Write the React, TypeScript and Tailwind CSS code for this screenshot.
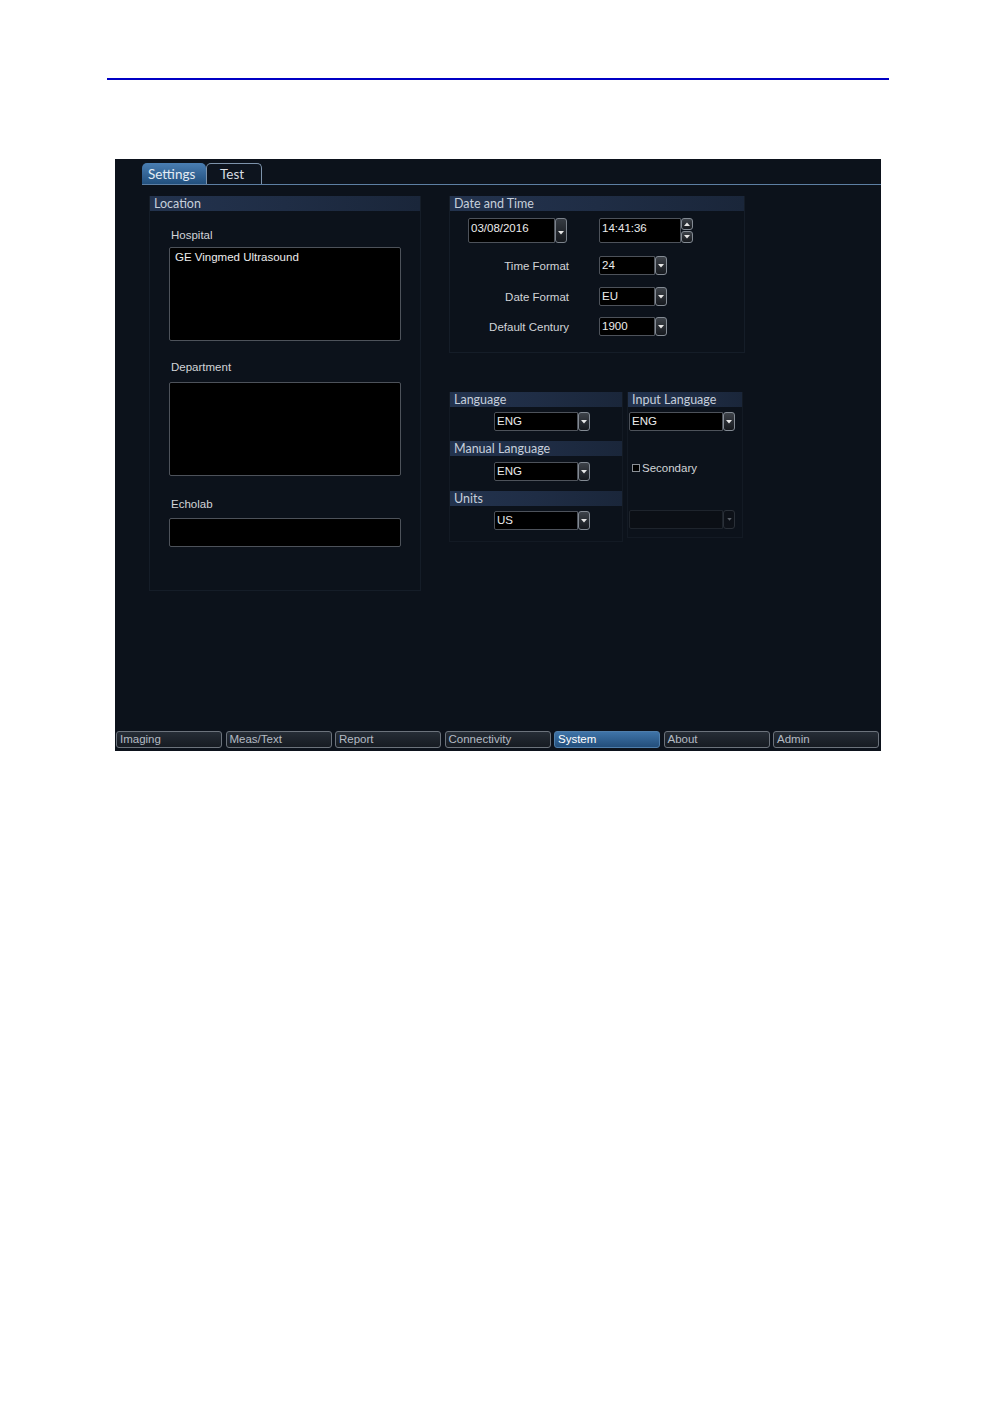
import React from "react";

const LBL = "font-['Liberation_Sans',Arial,sans-serif]";
const HDR = "font-['Lato','Noto_Sans',sans-serif]";

function Arrow({ up = false }: { up?: boolean }) {
  return (
    <svg width="6" height="4" viewBox="0 0 6 4" className="block">
      {up ? <path d="M0 4 L3 0.5 L6 4 Z" fill="#e6e6e6" /> : <path d="M0 0 L6 0 L3 3.5 Z" fill="#e6e6e6" />}
    </svg>
  );
}

function Btn({ className = "", up = false, dim = false }: { className?: string; up?: boolean; dim?: boolean }) {
  return (
    <div
      className={`flex items-center justify-center rounded-[3px] border ${
        dim ? "border-[#2a3038] bg-[#0d1118]" : "border-[#838a93] bg-gradient-to-b from-[#3e434a] to-[#16191e]"
      } ${className}`}
    >
      {dim ? (
        <svg width="5" height="3" viewBox="0 0 6 4"><path d="M0 0 L6 0 L3 3.5 Z" fill="#5a6068" /></svg>
      ) : (
        <Arrow up={up} />
      )}
    </div>
  );
}

function Drop({ w, value, dim = false }: { w: string; value?: string; dim?: boolean }) {
  return (
    <div className={`flex h-[19px] ${w}`}>
      <div
        className={`flex-1 rounded-l-[2px] border ${
          dim ? "border-[#1e242c] bg-[#0b0f15]" : "border-[#4d525a] bg-black"
        } pl-[2px] text-[11.5px] leading-[17px] text-[#ececec] ${LBL}`}
      >
        {value}
      </div>
      <Btn className="w-[12px] h-[19px]" dim={dim} />
    </div>
  );
}

function Header({ children, className = "" }: { children: React.ReactNode; className?: string }) {
  return (
    <div
      className={`h-[15px] bg-gradient-to-r from-[#23334e] via-[#1f2d45] to-[#1a263a] pl-[4px] text-[12.5px] leading-[15px] text-[#c6cfdb] ${HDR} ${className}`}
    >
      {children}
    </div>
  );
}

function Label({ children, className = "" }: { children: React.ReactNode; className?: string }) {
  return <div className={`text-[11.5px] leading-[14px] text-[#d2d4d8] ${LBL} ${className}`}>{children}</div>;
}

function FormRow({ label, value, mt }: { label: string; value: string; mt: string }) {
  return (
    <div className={`flex items-center ${mt}`}>
      <Label className="w-[119px] text-right">{label}</Label>
      <div className="ml-[30px]">
        <Drop w="w-[68px]" value={value} />
      </div>
    </div>
  );
}

const bottomTabs = ["Imaging", "Meas/Text", "Report", "Connectivity", "System", "About", "Admin"];

export default function App() {
  return (
    <div className="w-[996px] h-[1416px] bg-white overflow-hidden">
      <div className="ml-[107px] mt-[78px] h-[2px] w-[782px] bg-[#0000c4]" />
      <div className="ml-[115px] mt-[79px] flex h-[592px] w-[766px] flex-col bg-[#0c121b]">
        {/* top tabs */}
        <div className="flex h-[26px] items-end pt-[4px]">
          <div className="ml-[27px] flex h-[21px] flex-1 items-end border-b border-[#5d7fa3]">
            <div
              className={`flex h-[21px] w-[64px] items-end rounded-t-[5px] bg-gradient-to-b from-[#4a7eb2] to-[#22507e] pb-[2px] pl-[6px] text-[13.5px] leading-[15px] text-[#e3ebf4] ${HDR}`}
            >
              Settings
            </div>
            <div
              className={`flex h-[21px] w-[56px] items-end rounded-t-[5px] border border-b-0 border-[#7d93ab] bg-[#0d141e] pb-[2px] pl-[13px] text-[13.5px] leading-[15px] text-[#d8dde3] ${HDR}`}
            >
              Test
            </div>
          </div>
        </div>

        {/* content */}
        <div className="mt-[11px] flex pl-[34px]">
          {/* Location */}
          <div className="flex h-[395px] w-[272px] flex-col border-x border-b border-[#151d28]">
            <Header>Location</Header>
            <div className="pl-[19px]">
              <Label className="ml-[2px] mt-[17px]">Hospital</Label>
              <div className={`mt-[5px] h-[94px] w-[232px] rounded-[2px] border border-[#4d525a] bg-black pl-[5px] pt-[2px] text-[11.5px] leading-[14px] text-[#ececec] ${LBL}`}>
                GE Vingmed Ultrasound
              </div>
              <Label className="ml-[2px] mt-[19px]">Department</Label>
              <div className="mt-[8px] h-[94px] w-[232px] rounded-[2px] border border-[#4d525a] bg-black" />
              <Label className="ml-[2px] mt-[21px]">Echolab</Label>
              <div className="mt-[7px] h-[29px] w-[232px] rounded-[2px] border border-[#4d525a] bg-black" />
            </div>
          </div>

          {/* right column */}
          <div className="ml-[28px] flex w-[296px] flex-col">
            {/* Date and Time */}
            <div className="h-[157px] border-x border-b border-[#151d28]">
              <Header>Date and Time</Header>
              <div className="mt-[7px] flex pl-[18px]">
                <div className="flex h-[25px] w-[99px]">
                  <div className={`flex-1 rounded-l-[2px] border border-[#4d525a] bg-black pl-[2px] pt-[2px] text-[11.5px] leading-[14px] text-[#ececec] ${LBL}`}>
                    03/08/2016
                  </div>
                  <div className="flex h-[25px] w-[12px] flex-col justify-end rounded-[3px] border border-[#7b828b] bg-gradient-to-b from-[#363b42] to-[#15181d] pb-[7px]">
                    <div className="flex justify-center">
                      <Arrow />
                    </div>
                  </div>
                </div>
                <div className="ml-[32px] flex h-[25px] w-[94px]">
                  <div className={`flex-1 rounded-l-[2px] border border-[#4d525a] bg-black pl-[2px] pt-[2px] text-[11.5px] leading-[14px] text-[#ececec] ${LBL}`}>
                    14:41:36
                  </div>
                  <div className="flex w-[12px] flex-col">
                    <Btn className="h-[12px] w-[12px]" up />
                    <Btn className="mt-[1px] h-[12px] w-[12px]" />
                  </div>
                </div>
              </div>
              <FormRow label="Time Format" value="24" mt="mt-[13px]" />
              <FormRow label="Date Format" value="EU" mt="mt-[12px]" />
              <FormRow label="Default Century" value="1900" mt="mt-[11px]" />
            </div>

            {/* Language section */}
            <div className="mt-[39px] flex">
              <div className="h-[150px] w-[174px] border-x border-b border-[#131a24]">
                <Header>Language</Header>
                <div className="ml-[44px] mt-[5px]">
                  <Drop w="w-[96px]" value="ENG" />
                </div>
                <Header className="mt-[10px]">Manual Language</Header>
                <div className="ml-[44px] mt-[6px]">
                  <Drop w="w-[96px]" value="ENG" />
                </div>
                <Header className="mt-[10px]">Units</Header>
                <div className="ml-[44px] mt-[5px]">
                  <Drop w="w-[96px]" value="US" />
                </div>
              </div>
              <div className="ml-[4px] h-[146px] w-[116px] border-x border-b border-[#131a24]">
                <Header>Input Language</Header>
                <div className="ml-[1px] mt-[5px]">
                  <Drop w="w-[106px]" value="ENG" />
                </div>
                <div className="ml-[4px] mt-[30px] flex items-center">
                  <div className="h-[8px] w-[8px] border border-[#8a8f96] bg-black" />
                  <Label className="ml-[2px]">Secondary</Label>
                </div>
                <div className="ml-[1px] mt-[35px]">
                  <Drop w="w-[106px]" dim />
                </div>
              </div>
            </div>
          </div>
        </div>

        <div className="flex-1" />

        {/* bottom tabs */}
        <div className="mb-[3px] flex gap-[3.5px] pl-[1px] pr-[2px]">
          {bottomTabs.map((t) => (
            <div
              key={t}
              className={`flex h-[17px] flex-1 items-center rounded-[3px] border pl-[3px] text-[11.5px] ${LBL} ${
                t === "System"
                  ? "border-[#4f7eab] bg-gradient-to-b from-[#3f74a8] to-[#234e7b] text-white"
                  : "border-[#6c737c] bg-gradient-to-b from-[#262d36] to-[#161b22] text-[#b4bbc3]"
              }`}
            >
              {t}
            </div>
          ))}
        </div>
      </div>
    </div>
  );
}
